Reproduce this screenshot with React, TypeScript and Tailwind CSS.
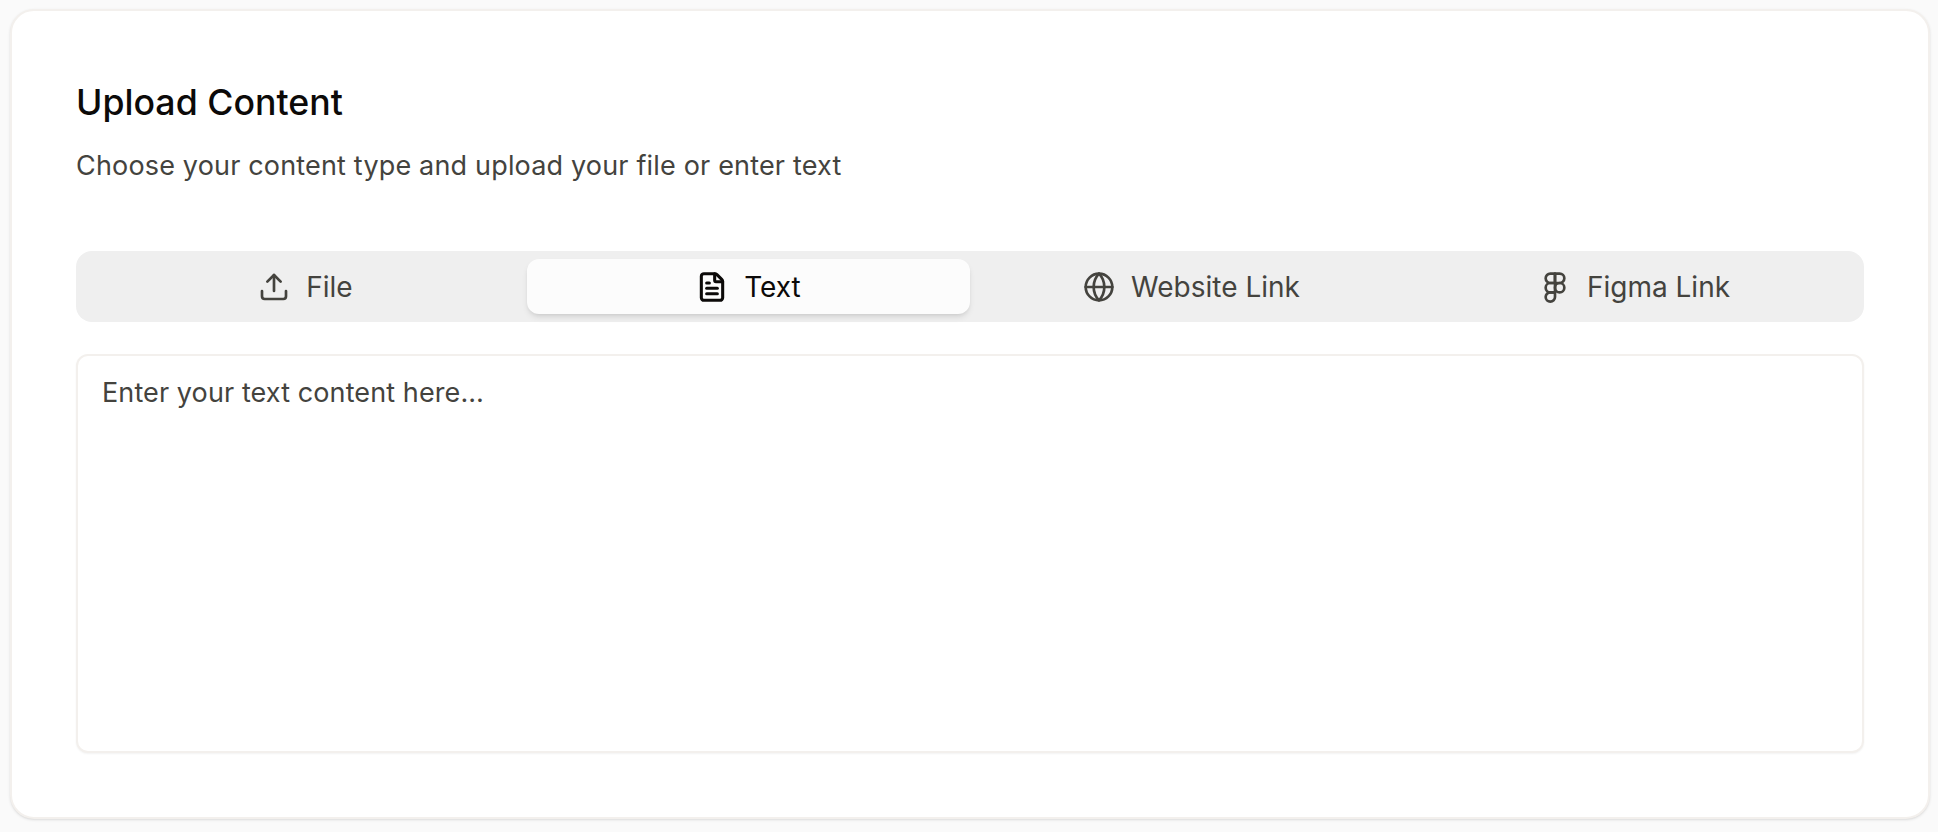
import { useState } from "react";
import { FileText, Figma, Globe, Upload } from "lucide-react";

const tabs = [
  { id: "file", label: "File", Icon: Upload },
  { id: "text", label: "Text", Icon: FileText },
  { id: "website", label: "Website Link", Icon: Globe },
  { id: "figma", label: "Figma Link", Icon: Figma },
];

export default function App() {
  const [active, setActive] = useState("text");

  return (
    <div className="min-h-[832px] bg-[#fafafa] pt-[9px] pl-[10px] pr-[8px] font-['Inter',sans-serif]">
      <div className="h-[810px] rounded-[24px] border-2 border-[#f3f0ed] bg-white px-[64px] pt-[69px] shadow-sm">
        <h1 className="text-[35.7px] leading-[44px] font-medium text-[#0c0a09]">
          Upload Content
        </h1>
        <p className="mt-[22px] text-[27px] leading-[40px] tracking-[0.17px] text-[#44433e]">
          Choose your content type and upload your file or enter text
        </p>

        <div className="mt-[65px] grid h-[71px] grid-cols-4 rounded-[16px] bg-[#efefef] p-[8px]">
          {tabs.map(({ id, label, Icon }) => (
            <button
              key={id}
              onClick={() => setActive(id)}
              className={
                active === id
                  ? "flex items-center justify-center gap-[16px] rounded-[12px] bg-[#fcfcfc] text-[28px] text-[#0c0a09] shadow-md"
                  : "flex items-center justify-center gap-[16px] rounded-[12px] text-[28px] text-[#44433e]"
              }
            >
              <Icon size={32} strokeWidth={active === id ? 2.3 : 2} />
              {label}
            </button>
          ))}
        </div>

        <textarea
          placeholder="Enter your text content here…"
          className="mt-[32px] block h-[399px] w-full resize-none rounded-[12px] border-2 border-[#f3f0ed] bg-white px-[24px] pt-[17px] pb-[16px] text-[27px] leading-[40px] tracking-[0.1px] text-[#44433e] shadow-xs outline-none placeholder:text-[#44433e]"
        />
      </div>
    </div>
  );
}
